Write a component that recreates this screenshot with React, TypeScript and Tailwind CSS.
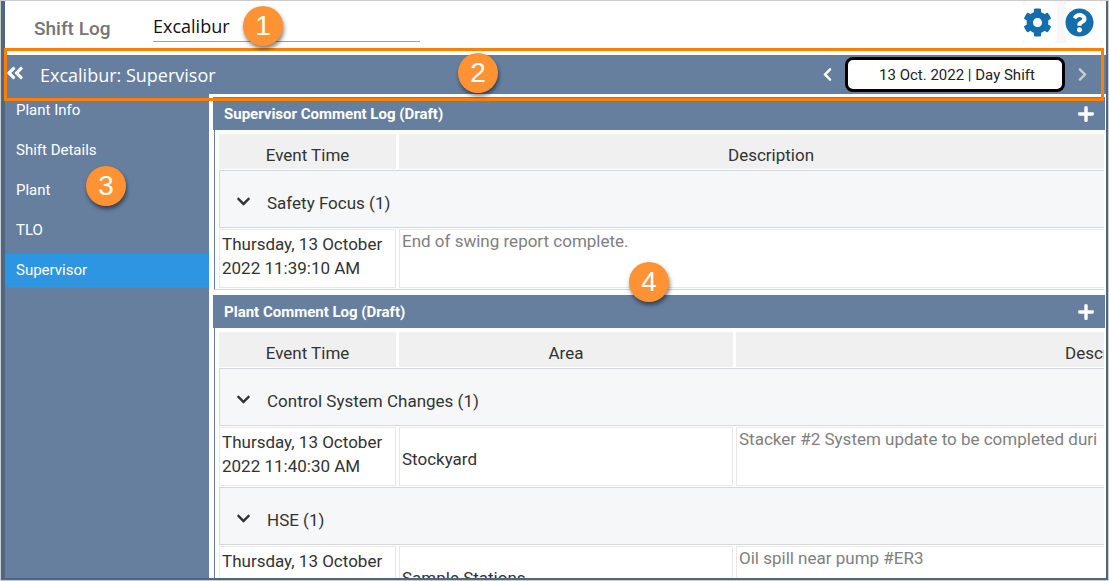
import React, { useState } from 'react';
import {
  FaAngleDoubleLeft,
  FaChevronDown,
  FaChevronLeft,
  FaChevronRight,
  FaCog,
  FaPlus,
  FaQuestionCircle,
} from 'react-icons/fa';

interface LogEntry {
  time: string;
  area?: string;
  description: string;
}

interface LogGroup {
  name: string;
  entries: LogEntry[];
}

interface CommentLogProps {
  title: string;
  groups: LogGroup[];
  showArea?: boolean;
}

const MENU_ITEMS = ['Plant Info', 'Shift Details', 'Plant', 'TLO', 'Supervisor'];

const supervisorGroups: LogGroup[] = [
  {
    name: 'Safety Focus',
    entries: [
      { time: 'Thursday, 13 October 2022 11:39:10 AM', description: 'End of swing report complete.' },
    ],
  },
];

const plantGroups: LogGroup[] = [
  {
    name: 'Control System Changes',
    entries: [
      {
        time: 'Thursday, 13 October 2022 11:40:30 AM',
        area: 'Stockyard',
        description: 'Stacker #2 System update to be completed duri',
      },
    ],
  },
  {
    name: 'HSE',
    entries: [
      {
        time: 'Thursday, 13 October 2022 11:42:05 AM',
        area: 'Sample Stations',
        description: 'Oil spill near pump #ER3',
      },
    ],
  },
];

const Callout: React.FC<{ label: string; className: string }> = ({ label, className }) => (
  <span
    className={`absolute z-20 flex size-10 items-center justify-center rounded-full bg-[#ff9233] font-['Liberation_Sans',sans-serif] text-[28px] leading-none text-white shadow-[1px_3px_4px_rgba(0,0,0,0.5)] ${className}`}
  >
    {label}
  </span>
);

const CommentLog: React.FC<CommentLogProps> = ({ title, groups, showArea = false }) => {
  const [collapsed, setCollapsed] = useState<string[]>([]);

  const toggle = (name: string) => {
    setCollapsed(prev => (prev.includes(name) ? prev.filter(n => n !== name) : [...prev, name]));
  };

  return (
    <section>
      <div className="flex h-[33px] items-center justify-between bg-[#677f9f] pr-[10px] pl-[11px] text-white">
        <h2 className="text-[15px] leading-5 font-bold">{title}</h2>
        <button aria-label={`Add to ${title}`}>
          <FaPlus className="size-[18px]" />
        </button>
      </div>
      <div className="mr-px ml-px overflow-hidden border-b border-l border-b-[#d5d8dc] border-l-[#677f9f] pt-[3px] pl-px">
        <table
          className={`table-fixed border-separate border-spacing-x-[3px] border-spacing-y-px text-[17px] leading-6 text-[#333] ${
            showArea ? 'w-[1267px]' : 'w-[930px]'
          }`}
        >
          <colgroup>
            <col className="w-[177px]" />
            {showArea && <col className="w-[334px]" />}
            <col />
          </colgroup>
          <thead>
            <tr className="h-[35px] bg-[#f0f0f0]">
              <th className="p-0 pt-1.5 font-normal">Event Time</th>
              {showArea && <th className="p-0 pt-1.5 font-normal">Area</th>}
              <th className="p-0 pt-1.5 font-normal">Description</th>
            </tr>
          </thead>
          {groups.map(group => (
            <tbody key={group.name}>
              <tr className="h-[58px]">
                <td
                  colSpan={showArea ? 3 : 2}
                  className="border border-[#d5d7da] bg-[#f6f7f9] p-0 pt-2 pl-4"
                >
                  <button className="flex items-center gap-4" onClick={() => toggle(group.name)}>
                    <FaChevronDown className="mb-1 size-[15px]" />
                    <span>
                      {group.name} ({group.entries.length})
                    </span>
                  </button>
                </td>
              </tr>
              {!collapsed.includes(group.name) &&
                group.entries.map(entry => (
                  <tr key={entry.time} className="h-[59px]">
                    <td className="border border-[#e8e8e8] p-0 pb-1.5 pl-0.5">{entry.time}</td>
                    {showArea && (
                      <td className="border border-[#e8e8e8] p-0 pt-1 pl-0.5">{entry.area}</td>
                    )}
                    <td className="border border-[#e8e8e8] p-0 pt-px pl-0.5 align-top leading-5 whitespace-nowrap text-[#808080]">
                      {entry.description}
                    </td>
                  </tr>
                ))}
            </tbody>
          ))}
        </table>
      </div>
    </section>
  );
};

export default function App() {
  const [site, setSite] = useState('Excalibur');
  const [active, setActive] = useState('Supervisor');

  return (
    <div className="h-screen border border-[#cccccc] bg-white font-[Roboto,sans-serif]">
      <div className="flex h-full flex-col border-r-2 border-b-2 border-l-4 border-[#506784]">
        <header className="flex h-[54px] shrink-0 items-start justify-between">
          <div className="relative flex items-center pt-2 pl-[29px]">
            <h1 className="w-[119px] pt-1.5 text-[19px] leading-7 font-medium text-[#757575]">Shift Log</h1>
            <input
              aria-label="Site"
              value={site}
              onChange={e => setSite(e.target.value)}
              className="h-8 w-[267px] border-b border-[#a0a0a0] font-['Open_Sans',sans-serif] text-[18px] leading-6 text-[#111] outline-none"
            />
            <Callout label="1" className="top-[5px] left-[238px]" />
          </div>
          <div className="mr-[3px] flex gap-2 bg-[#f7f7f7] text-[#146eab]">
            <button aria-label="Settings" className="flex h-[42px] w-[34px] items-center rounded-md bg-white">
              <FaCog className="size-[29px]" />
            </button>
            <button aria-label="Help" className="flex h-[42px] w-[38px] items-center rounded-md bg-white">
              <FaQuestionCircle className="size-[29px]" />
            </button>
          </div>
        </header>

        <div className="relative flex h-[39px] shrink-0 items-center justify-between bg-[#677f9f] text-white">
          <div className="pointer-events-none absolute -inset-x-px -top-[7px] -bottom-[7px] z-10 mr-[3px] border-[3px] border-[#ff8000]" />
          <div className="flex items-center gap-[15px]">
            <button aria-label="Collapse menu">
              <FaAngleDoubleLeft className="mb-1 size-5" />
            </button>
            <span className="font-['Open_Sans',sans-serif] text-[18px] leading-6">{site}: Supervisor</span>
          </div>
          <Callout label="2" className="-top-[2px] left-[453px]" />
          <div className="mr-4 flex items-center gap-[10px]">
            <button aria-label="Previous shift">
              <FaChevronLeft className="size-[15px]" />
            </button>
            <button className="h-[35px] w-[220px] rounded-lg border-[3px] border-black bg-white pt-0.5 pl-1 text-[15px] text-[#222]">
              13 Oct. 2022 | Day Shift
            </button>
            <button aria-label="Next shift" className="text-[#c5cbd3]">
              <FaChevronRight className="size-[15px]" />
            </button>
          </div>
        </div>

        <div className="flex min-h-0 flex-1">
          <nav className="relative flex w-[204px] shrink-0 flex-col gap-[7px] bg-[#677f9f]">
            {MENU_ITEMS.map(item => (
              <a
                key={item}
                href="#"
                onClick={() => setActive(item)}
                className={`flex h-[33px] items-center pl-[11px] text-[15px] text-white ${
                  item === active ? 'bg-[#2d96e2]' : ''
                }`}
              >
                {item}
              </a>
            ))}
            <Callout label="3" className="top-[72px] left-[81px]" />
          </nav>
          <main className="relative flex min-w-0 flex-1 flex-col gap-[5px] overflow-hidden pt-[3px] pr-px pl-1">
            <CommentLog title="Supervisor Comment Log (Draft)" groups={supervisorGroups} />
            <CommentLog title="Plant Comment Log (Draft)" groups={plantGroups} showArea />
            <Callout label="4" className="top-[168px] left-[420px]" />
          </main>
        </div>
      </div>
    </div>
  );
}
